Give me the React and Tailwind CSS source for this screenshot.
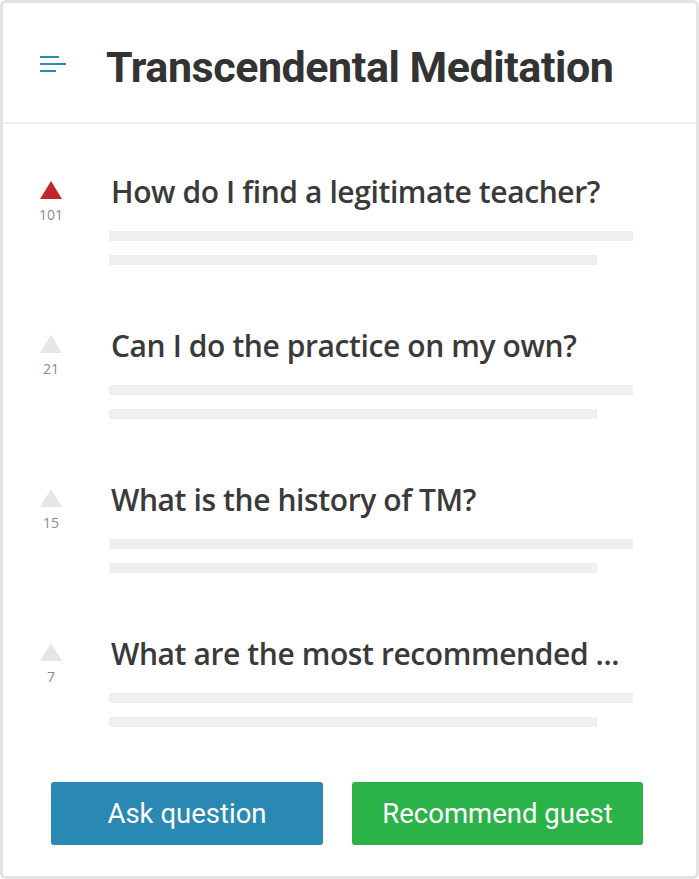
import React from "react";

const questions = [
  { t: "How do I find a legitimate teacher?", n: 101, active: true },
  { t: "Can I do the practice on my own?", n: 21 },
  { t: "What is the history of TM?", n: 15 },
  { t: "What are the most recommended ...", n: 7 },
];

function Tri({ active }) {
  return (
    <svg width="22" height="18" viewBox="0 0 22 18">
      <polygon points="11,0 22,18 0,18" fill={active ? "#c1272a" : "#e6e6e6"} />
    </svg>
  );
}

export default function App() {
  return (
    <div className="w-[699px] h-[879px] bg-white">
      <div className="w-full h-full border-[3px] border-[#e3e3e3] rounded-[6px] flex flex-col">
        <div className="h-[121px] border-b-2 border-[#eeeeee] flex items-center shrink-0">
          <div className="w-[103px] pl-[37px] pt-[2px]">
            <svg width="27" height="16" viewBox="0 0 27 16">
              <rect x="0" y="0" width="19" height="2" fill="#2a8ab8" />
              <rect x="0" y="7" width="26" height="2" fill="#2a8ab8" />
              <rect x="0" y="14" width="16" height="2" fill="#2a8ab8" />
            </svg>
          </div>
          <h1 className="text-[43px] font-bold text-[#333333] tracking-[-0.45px] leading-none pt-[9px]" style={{ fontFamily: "Roboto, sans-serif" }}>
            Transcendental Meditation
          </h1>
        </div>
        <div className="flex flex-col gap-[61px] pt-[48px]" style={{ fontFamily: "'Open Sans', sans-serif" }}>
          {questions.map((q, i) => (
            <div key={i} className="flex">
              <div className="w-[105px] pl-[37px] flex flex-col items-start pt-[9px]">
                <div className="w-[22px] flex flex-col items-center">
                  <Tri active={q.active} />
                  <div className="text-[14px] text-[#8a8a8a] mt-[9px] leading-none" style={{ fontFamily: "'Open Sans', sans-serif" }}>{q.n}</div>
                </div>
              </div>
              <div className="flex-1 pl-[3px] pr-[63px]">
                <div className="h-[40px] leading-[40px] text-[30px] font-semibold text-[#3a3a3a] tracking-[-0.4px] whitespace-nowrap">
                  {q.t}
                </div>
                <div className="mt-[19px] h-[10px] w-[524px] bg-[#efefef] -ml-[2px]" />
                <div className="mt-[14px] h-[10px] w-[488px] bg-[#efefef] -ml-[2px]" />
              </div>
            </div>
          ))}
        </div>
        <div className="flex gap-[29px] pl-[48px] mt-[55px]" style={{ fontFamily: "Roboto, sans-serif" }}>
          <button className="w-[272px] h-[63px] bg-[#2a89b3] rounded-[3px] text-white text-[27.5px]">Ask question</button>
          <button className="w-[291px] h-[63px] bg-[#2bb34a] rounded-[3px] text-white text-[27.5px]">Recommend guest</button>
        </div>
      </div>
    </div>
  );
}
